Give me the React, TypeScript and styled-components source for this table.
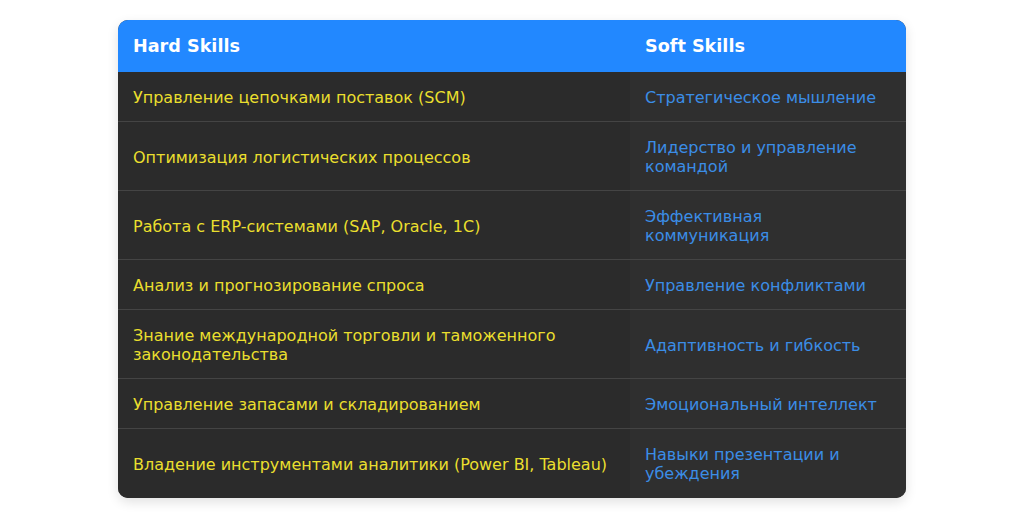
import React from "react";
import styled, { createGlobalStyle } from "styled-components";

const GlobalStyle = createGlobalStyle`
  html, body {
    margin: 0;
    padding: 0;
    background: #ffffff;
    font-family: "DejaVu Sans", "Noto Sans", sans-serif;
  }
`;

const skills: [string, string][] = [
  ["Управление цепочками поставок (SCM)", "Стратегическое мышление"],
  ["Оптимизация логистических процессов", "Лидерство и управление командой"],
  ["Работа с ERP-системами (SAP, Oracle, 1C)", "Эффективная коммуникация"],
  ["Анализ и прогнозирование спроса", "Управление конфликтами"],
  [
    "Знание международной торговли и таможенного законодательства",
    "Адаптивность и гибкость",
  ],
  ["Управление запасами и складированием", "Эмоциональный интеллект"],
  [
    "Владение инструментами аналитики (Power BI, Tableau)",
    "Навыки презентации и убеждения",
  ],
];

const App: React.FC = () => {
  return (
    <>
      <GlobalStyle />
      <Page>
        <Table>
          <HeadCell>Hard Skills</HeadCell>
          <HeadCell>Soft Skills</HeadCell>
          {skills.map(([hard, soft], i) => (
            <React.Fragment key={hard}>
              <Cell $last={i === skills.length - 1} $kind="hard">
                {hard}
              </Cell>
              <Cell $last={i === skills.length - 1} $kind="soft">
                {soft}
              </Cell>
            </React.Fragment>
          ))}
        </Table>
      </Page>
    </>
  );
};

const Page = styled.div`
  padding: 20px 0 20px;
`;

const Table = styled.div`
  width: 788px;
  margin: 0 auto;
  display: grid;
  grid-template-columns: 512px 1fr;
  border-radius: 10px;
  overflow: hidden;
  background: #2c2c2c;
  box-shadow: 0 4px 12px rgba(0, 0, 0, 0.12);
`;

const HeadCell = styled.div`
  background: #2288ff;
  color: #ffffff;
  font-weight: bold;
  font-size: 17.6px;
  line-height: 22px;
  padding: 15px 15px;
`;

interface CellProps {
  $last: boolean;
  $kind: "hard" | "soft";
}

const Cell = styled.div<CellProps>`
  display: flex;
  align-items: center;
  padding: 16px 15px 14px;
  font-size: 16px;
  line-height: 19px;
  color: ${({ $kind }) => ($kind === "hard" ? "#eadf2e" : "#3b8de6")};
  background: ${({ $kind }) => ($kind === "hard" ? "#2b2b2b" : "#2f2f2f")};
  border-bottom: ${({ $last }) => ($last ? "none" : "1px solid #444444")};
  ${({ $last }) => $last && "padding-bottom: 15px;"}
`;

export default App;
